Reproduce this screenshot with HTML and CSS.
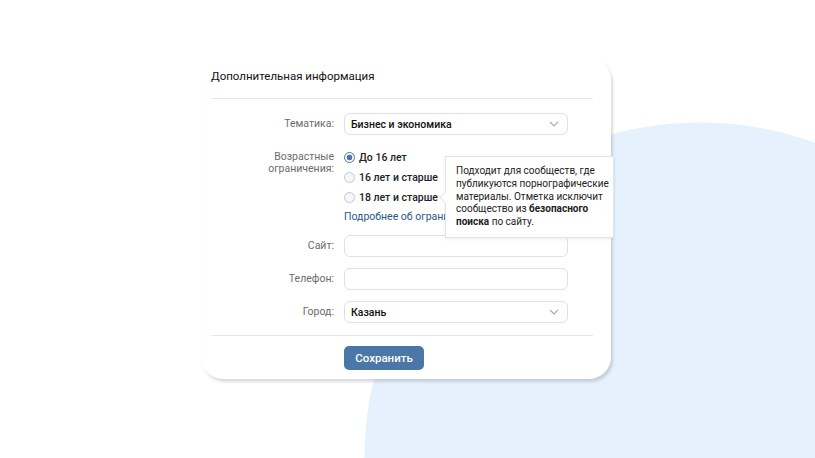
FILE: index.html
```html
<!DOCTYPE html>
<html lang="ru">
<head>
    <meta charset="UTF-8">
    <meta name="viewport" content="width=device-width, initial-scale=1.0">
    <title>Дополнительная информация</title>
    <link rel="stylesheet" href="styles.css">
</head>
<body>

    <div class="card">
        <h2 class="title">Дополнительная информация</h2>

        <div class="rows">
            <div class="row">
                <label class="label">Тематика:</label>
                <div class="select">
                    <span>Бизнес и экономика</span>
                    <svg class="chevron" width="10" height="6" viewBox="0 0 10 6"><polyline points="1,1 5,5 9,1" fill="none" stroke="#a3adb8" stroke-width="1.1"/></svg>
                </div>
            </div>

            <div class="row row-age">
                <label class="label">Возрастные ограничения:</label>
                <div class="radios">
                    <label class="radio"><input type="radio" name="age" checked> До 16 лет</label>
                    <label class="radio"><input type="radio" name="age"> 16 лет и старше</label>
                    <label class="radio"><input type="radio" name="age"> 18 лет и старше</label>
                    <a class="more" href="#">Подробнее об ограничениях</a>
                </div>

                <div class="tooltip">
                    Подходит для сообществ, где публикуются порнографические материалы. Отметка исключит сообщество из <b>безопасного поиска</b> по сайту.
                </div>
            </div>

            <div class="row">
                <label class="label">Сайт:</label>
                <input class="field" type="text">
            </div>

            <div class="row">
                <label class="label">Телефон:</label>
                <input class="field" type="text">
            </div>

            <div class="row">
                <label class="label">Город:</label>
                <div class="select">
                    <span>Казань</span>
                    <svg class="chevron" width="10" height="6" viewBox="0 0 10 6"><polyline points="1,1 5,5 9,1" fill="none" stroke="#a3adb8" stroke-width="1.1"/></svg>
                </div>
            </div>
        </div>

        <div class="footer">
            <button class="btn">Сохранить</button>
        </div>
    </div>

</body>
</html>
```
FILE: styles.css
```css
* {
    box-sizing: border-box;
}

html, body {
    margin: 0;
    height: 100%;
}

body {
    width: 815px;
    height: 458px;
    overflow: hidden;
    background: radial-gradient(circle 336px at 700px 458px, #e5f2fd 335px, #fff 336px);
    font-family: Roboto, "Noto Sans", sans-serif;
    color: #000;
    padding-top: 58px;
}

.card {
    width: 410px;
    margin-left: 201px;
    background-color: #fff;
    border-radius: 22px;
    box-shadow: 2px 3px 3px rgba(0, 0, 0, .14);
    padding: 10px 18px 9px 10px;
}

.title {
    margin: 0;
    font-size: 11.5px;
    font-weight: 400;
    line-height: 16px;
    color: #111;
    padding-bottom: 14px;
    border-bottom: 1px solid #e7e8ec;
}

.rows {
    display: flex;
    flex-direction: column;
    gap: 11px;
    padding: 14px 0 12px;
    border-bottom: 1px solid #e7e8ec;
}

.row {
    display: flex;
    align-items: center;
    gap: 10px;
    position: relative;
}

.label {
    width: 123px;
    text-align: right;
    font-size: 10.5px;
    line-height: 12px;
    color: #6b6b6b;
}

.row-age {
    align-items: flex-start;
    margin-top: 1px;
    z-index: 2;
}

.row-age .label {
    padding-top: 4px;
}

.select, .field {
    width: 224px;
    height: 22px;
    border: 1px solid #dce1e6;
    border-radius: 6px;
    background: #fff;
    font-family: inherit;
}

.select {
    display: flex;
    align-items: center;
    justify-content: space-between;
    padding: 0 8px 0 6px;
    font-size: 10.5px;
    font-weight: 500;
    color: #111;
}

.chevron {
    display: block;
}

.radios {
    display: flex;
    flex-direction: column;
}

.radio {
    display: flex;
    align-items: center;
    gap: 4px;
    height: 20px;
    font-size: 10.5px;
    font-weight: 500;
    color: #222;
}

.radio input {
    appearance: none;
    margin: 0;
    width: 11px;
    height: 11px;
    border: 1px solid #c0cad5;
    border-radius: 50%;
    background: #f5f7fa;
}

.radio input:checked {
    border-color: #4a76a8;
    background: radial-gradient(circle, #4a76a8 2.6px, #fff 3.2px);
}

.more {
    display: block;
    height: 20px;
    line-height: 20px;
    margin-bottom: -3px;
    font-size: 10.5px;
    color: #2a5885;
    text-decoration: none;
    white-space: nowrap;
}

.tooltip {
    position: absolute;
    left: 234px;
    top: 9px;
    width: 169px;
    padding: 8px 3px 8px 10px;
    background: #fff;
    border: 1px solid #e1e4e8;
    box-shadow: 0 1px 3px rgba(0, 0, 0, .08);
    font-size: 10px;
    line-height: 12.8px;
    color: #222;
}

.tooltip b {
    font-weight: 700;
}

.tooltip::before {
    content: "";
    position: absolute;
    left: -5px;
    top: 36px;
    width: 8px;
    height: 8px;
    background: #fff;
    border-left: 1px solid #e1e4e8;
    border-bottom: 1px solid #e1e4e8;
    transform: rotate(45deg);
}

.footer {
    padding: 10px 0 0 133px;
}

.btn {
    width: 80px;
    height: 24px;
    border: none;
    border-radius: 5px;
    background-color: #4a76a8;
    color: #fff;
    font-family: inherit;
    font-size: 11.5px;
    font-weight: 500;
    cursor: pointer;
}
```
